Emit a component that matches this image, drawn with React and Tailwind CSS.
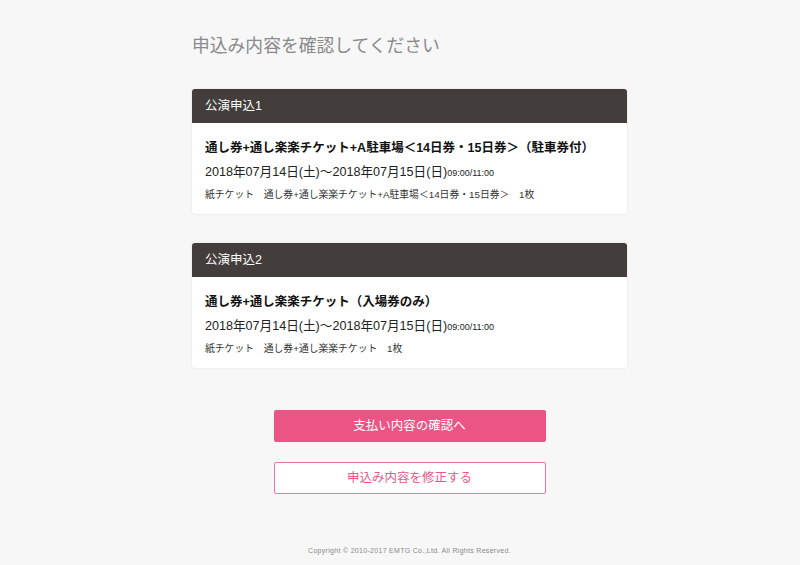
import React from "react";

const fontStack = { fontFamily: '"Liberation Sans", "Noto Sans CJK JP", sans-serif' };

const entries = [
  {
    label: "公演申込1",
    title: "通し券+通し楽楽チケット+A駐車場＜14日券・15日券＞（駐車券付）",
    ticket: "紙チケット　通し券+通し楽楽チケット+A駐車場＜14日券・15日券＞　1枚",
  },
  {
    label: "公演申込2",
    title: "通し券+通し楽楽チケット（入場券のみ）",
    ticket: "紙チケット　通し券+通し楽楽チケット　1枚",
  },
];

function EntryCard({ entry }) {
  return (
    <section className="rounded-[3px] bg-white shadow-[0_0_2px_rgba(0,0,0,0.12)]">
      <h2 className="flex h-[34px] items-center rounded-t-[3px] bg-[#433e3c] px-[13px] text-[12.5px] text-white">{entry.label}</h2>
      <div className="px-[13px] pb-[11px] pt-[16px]">
        <p className="text-[12.5px] font-bold leading-[18px] text-[#111]">{entry.title}</p>
        <p className="mt-[6px] text-[12.6px] leading-[18px] text-[#222]">
          2018年07月14日(土)～2018年07月15日(日)<span className="text-[9px]">09:00/11:00</span>
        </p>
        <p className="mt-[5px] text-[9.8px] leading-[16px] text-[#333]">{entry.ticket}</p>
      </div>
    </section>
  );
}

export default function App() {
  return (
    <div className="min-h-[565px] bg-[#f7f7f7] pl-[19px]" style={fontStack}>
      <div className="mx-auto w-[435px] pt-[35px]">
        <h1 className="text-[17.8px] leading-[22px] text-[#8a8a8a]">申込み内容を確認してください</h1>

        <div className="mt-[32px] flex flex-col gap-[29px]">
          {entries.map((entry) => (
            <EntryCard key={entry.label} entry={entry} />
          ))}
        </div>

        <div className="mt-[42px] flex flex-col items-center gap-[20px]">
          <button type="button" className="h-[32px] w-[272px] rounded-[2px] bg-[#eb5585] text-[12.5px] text-white">
            支払い内容の確認へ
          </button>
          <button type="button" className="h-[32px] w-[272px] rounded-[2px] border border-[#e9779b] bg-white text-[12.5px] text-[#e8588a]">
            申込み内容を修正する
          </button>
        </div>

        <p className="mt-[52px] text-center text-[7px] tracking-[0.3px] text-[#888]">
          Copyright © 2010-2017 EMTG Co.,Ltd. All Rights Reserved.
        </p>
      </div>
    </div>
  );
}
